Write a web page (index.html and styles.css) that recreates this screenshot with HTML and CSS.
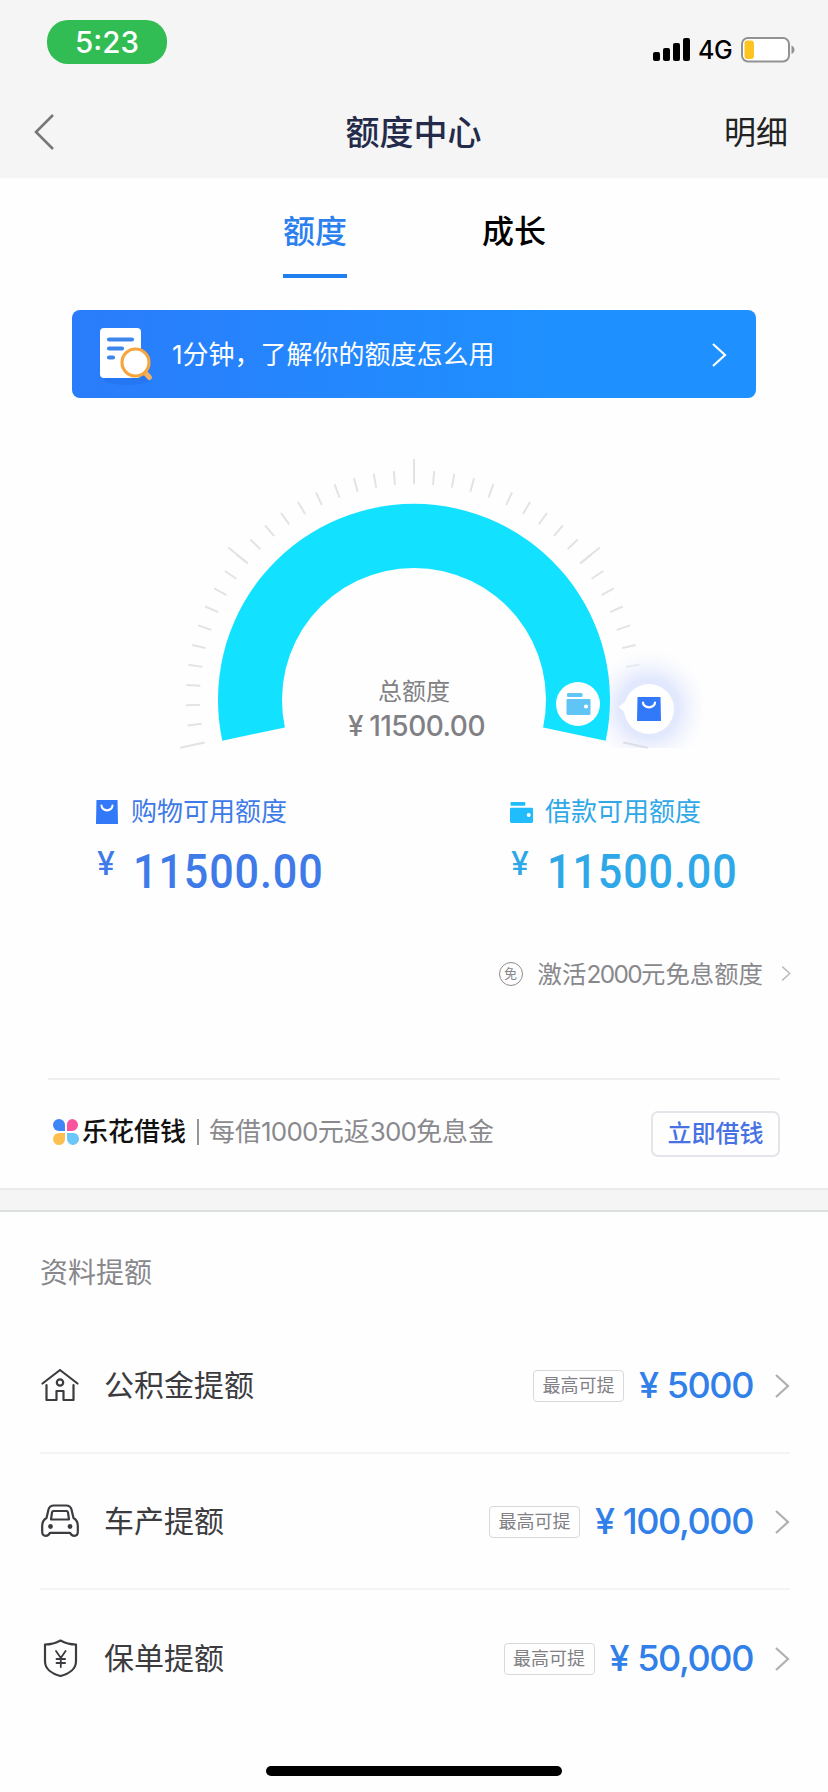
FILE: index.html
```html
<!DOCTYPE html>
<html lang="zh-CN">
<head>
<meta charset="utf-8">
<title>额度中心</title>
<link rel="stylesheet" href="styles.css">
</head>
<body>
<svg class="defs" width="0" height="0">
  <symbol id="bag" viewBox="0 0 24 24" preserveAspectRatio="none">
    <path d="M.5 0h23l.5 24H0z" fill="currentColor"/>
    <path d="M6 5.500a6 4.800 0 0 0 12 0" fill="none" stroke="#fff" stroke-width="2.200" stroke-linecap="round"/>
  </symbol>
  <symbol id="wallet" viewBox="0 0 24 24">
    <rect x=".5" y="1" width="15.500" height="4" rx="1.200" fill="currentColor"/>
    <path d="M0 8.200q0-1.200 1.200-1.200H23q1 0 1 1v13.500q0 1.500-1.500 1.500h-21Q0 23 0 21.500z" fill="currentColor"/>
    <circle cx="19.500" cy="14.500" r="2.100" fill="#fff"/>
  </symbol>
  <symbol id="arrow" viewBox="0 0 16 26">
    <path d="M2 2l12 11L2 24" fill="none" stroke="currentColor" stroke-width="2.200"/>
  </symbol>
</svg>

<header class="top">
  <div class="status">
    <span class="clock">5:23</span>
    <div class="signals">
      <svg width="38" height="24" viewBox="0 0 38 24"><rect x="0" y="14" width="7" height="9" rx="2"/><rect x="10" y="10" width="7" height="13" rx="2"/><rect x="20" y="5" width="7" height="18" rx="2"/><rect x="30" y="0" width="7" height="23" rx="2"/></svg>
      <span class="network">4G</span>
      <svg width="54" height="26" viewBox="0 0 54 26"><rect x="1" y="1" width="47" height="23.500" rx="6" fill="#fff" stroke="#929292" stroke-width="2"/><rect x="3.500" y="3.500" width="9.500" height="18.500" rx="3" fill="#fdc321"/><path d="M50.500 8.500c4 1.500 4 7 0 8.500z" fill="#929292"/></svg>
    </div>
  </div>
  <nav class="navbar">
    <svg class="back" width="24" height="38" viewBox="0 0 24 38"><path d="M20 2L3 19l17 17" fill="none" stroke="#777" stroke-width="2.600"/></svg>
    <h1>额度中心</h1>
    <a class="detail">明细</a>
  </nav>
</header>

<div class="tabs"><a class="tab active">额度</a><a class="tab">成长</a></div>

<section class="banner">
  <svg width="56" height="60" viewBox="0 0 56 60">
    <ellipse cx="27" cy="54" rx="23" ry="5" fill="#1b5fd9" opacity=".25"/>
    <rect x="0" y="2" width="41" height="50" rx="4" fill="#fff"/>
    <path d="M9 13.500h23M9 22.500h13M9 31.500h4" stroke="#3f86ec" stroke-width="4.200" stroke-linecap="round"/>
    <path d="M44.500 46l5 5.500" stroke="#f0b262" stroke-width="5" stroke-linecap="round"/>
    <circle cx="35.500" cy="36.500" r="13.500" fill="#fff" stroke="#f7a53f" stroke-width="3.200"/>
  </svg>
  <p>1分钟，了解你的额度怎么用</p>
  <svg class="banner-arrow" width="16" height="26"><use href="#arrow"/></svg>
</section>

<section class="gauge">
  <svg class="dial" width="570" height="310" viewBox="134 448 570 310">
    <defs>
      <radialGradient id="glow" gradientUnits="userSpaceOnUse" cx="649" cy="708" r="60"><stop offset="0" stop-color="#d9e2fc"/><stop offset=".5" stop-color="#e3e9fd"/><stop offset="1" stop-color="#f8f9fe" stop-opacity="0"/></radialGradient>
    </defs>
    <g fill="none" stroke="#e3e3e5" stroke-width="2">
      <path d="M197.800 744a221 221 0 1 1 432.400 0" stroke-width="14" pathLength="40" stroke-dasharray=".1 .9" stroke-dashoffset=".05"/>
      <path d="M414 459v25" id="major"/>
      <use href="#major" transform="rotate(-102 414 698)"/>
      <use href="#major" transform="rotate(-51 414 698)"/>
      <use href="#major" transform="rotate(51 414 698)"/>
    </g>
    <rect x="590" y="648" width="112" height="100" fill="url(#glow)"/>
    <path d="M222.300 740.700A196 196 0 1 1 605.700 740.700L543.100 727.400A132 132 0 1 0 284.900 727.400z" fill="#12e2ff"/>
    <use href="#major" transform="rotate(102 414 698)" fill="none" stroke="#dcdfe8" stroke-width="2"/>
    <path d="M618.500 707l12-10v20z" fill="#fff"/>
    <circle cx="649" cy="709" r="25" fill="#fff"/>
    <circle cx="578" cy="704" r="22" fill="#fff"/>
    <use href="#wallet" x="566" y="692" width="25" height="24" class="ico-wallet-soft"/>
    <use href="#bag" x="637" y="697" width="24" height="24" class="ico-bag"/>
  </svg>
  <div class="total">
    <span class="total-label">总额度</span>
    <span class="total-sum"><i>¥</i><b>11500.00</b></span>
  </div>
</section>

<section class="limits">
  <div class="limit shop">
    <div class="limit-name"><svg width="24" height="24"><use href="#bag" x="1" width="22" height="24"/></svg><span>购物可用额度</span></div>
    <div class="limit-sum"><i>¥</i><b>11500.00</b></div>
  </div>
  <div class="limit loan">
    <div class="limit-name"><svg width="24" height="24"><use href="#wallet" x="1" y="1" width="23" height="23"/></svg><span>借款可用额度</span></div>
    <div class="limit-sum"><i>¥</i><b>11500.00</b></div>
  </div>
</section>

<a class="activate"><span class="free">免</span><span class="activate-text">激活<em>2000</em>元免息额度</span><svg width="10" height="17"><use href="#arrow"/></svg></a>

<section class="promo">
  <svg width="26" height="26" viewBox="0 0 26 26"><path d="M6 0h0a6 6 0 0 1 6 6v6H6A6 6 0 0 1 6 0z" fill="#3d86f7"/><path d="M19 0a6 6 0 0 1 0 12h-5V6a6 6 0 0 1 5-6z" fill="#f9529f"/><path d="M6 14h6v5.500a6 6 0 1 1-6-5.500z" fill="#fdbf50"/><path d="M14 14h5a6 6 0 1 1-5 6z" fill="#6bc6f9"/></svg>
  <strong>乐花借钱</strong><span class="bar"></span>
  <span class="promo-text">每借<em>1000</em>元返<em>300</em>免息金</span>
  <a class="button">立即借钱</a>
</section>

<div class="band"></div>

<section class="raise">
  <h2>资料提额</h2>
  <a class="row">
    <svg class="row-icon" width="38" height="38" viewBox="0 0 38 38"><g fill="none" stroke="#3b3b40" stroke-width="2.200" stroke-linecap="round" stroke-linejoin="round"><path d="M1.500 17.500L19 4l17.500 13.500M5.500 19v15h10v-9h7v9h10V19"/><circle cx="19" cy="16.500" r="3.200"/></g></svg>
    <span class="row-name">公积金提额</span><span class="tag">最高可提</span><span class="sum"><i>¥</i><b>5000</b></span><svg class="go" width="16" height="26"><use href="#arrow"/></svg>
  </a>
  <a class="row">
    <svg class="row-icon" width="38" height="38" viewBox="0 0 38 38"><g fill="none" stroke="#3b3b40" stroke-width="2.200" stroke-linecap="round" stroke-linejoin="round"><path d="M13 3.500h12q4.500 0 5.500 4l2 8.500q4.300 2.500 4.300 8v6q0 3.800-3.500 3.800-3 0-4.300-3H9q-1.300 3-4.300 3Q1.200 33.800 1.200 30v-6q0-5.500 4.300-8l2-8.500Q8.500 3.500 13 3.500z"/><path d="M12.500 9h13q1.200 0 1.500 1.500l1 7H10l1-7Q11.300 9 12.500 9z"/></g><circle cx="9.500" cy="24.500" r="2.400" fill="#3b3b40"/><circle cx="29" cy="24.500" r="2.400" fill="#3b3b40"/></svg>
    <span class="row-name">车产提额</span><span class="tag">最高可提</span><span class="sum"><i>¥</i><b>100,000</b></span><svg class="go" width="16" height="26"><use href="#arrow"/></svg>
  </a>
  <a class="row">
    <svg class="row-icon" width="38" height="38" viewBox="0 0 38 38"><g fill="none" stroke="#3b3b40" stroke-width="2.200" stroke-linecap="round" stroke-linejoin="round"><path d="M19.500 1.500q7 4 15.500 4V22c0 8-7 13-15.500 15C11 35 4 30 4 22V5.500q8.500 0 15.500-4z"/><path d="M15 12l4.800 7 4.800-7M19.800 19v9M15.500 20h8.600M15.500 24h8.600" stroke-width="1.800"/></g></svg>
    <span class="row-name">保单提额</span><span class="tag">最高可提</span><span class="sum"><i>¥</i><b>50,000</b></span><svg class="go" width="16" height="26"><use href="#arrow"/></svg>
  </a>
</section>
<div class="home-bar"></div>
</body>
</html>
```
FILE: styles.css
```css
* { box-sizing: border-box; }
body {
  margin: 0;
  width: 828px;
  height: 1792px;
  display: flex;
  flex-direction: column;
  overflow: hidden;
  background: #fefefe;
  font-family: Inter, "Noto Sans CJK SC", sans-serif;
  color: #3b3b40;
}
h1, h2, p { margin: 0; font-weight: 400; }
i, em { font-style: normal; }
b { font-weight: inherit; }
svg { flex: none; display: block; }
.defs { position: absolute; }

.top { height: 178px; background: #f5f5f5; }
.status { height: 88px; padding: 20px 33px 0 47px; display: flex; justify-content: space-between; align-items: flex-start; }
.clock {
  width: 120px; height: 44px; border-radius: 21px; background: #31bd53;
  color: #fff; font-size: 29.500px; line-height: 45px; font-weight: 500; text-align: center;
}
.signals { display: flex; align-items: center; gap: 7px; padding-top: 17px; color: #000; }
.network { width: 36px; font-size: 25px; line-height: 26px; font-weight: 500; letter-spacing: -.4px; }
.navbar { height: 88px; padding: 0 40px 0 33px; display: grid; grid-template-columns: 64px 1fr 64px; align-items: center; }
.navbar h1 { padding-top: 1px; font-size: 34px; line-height: 40px; font-weight: 500; color: #242b4a; text-align: center; margin-left: 6px; }
.detail { padding-top: 2px; font-size: 32px; line-height: 40px; color: #222; }

.tabs { height: 132px; display: flex; gap: 135px; padding: 33px 0 0 283px; }
.tab { width: 64px; height: 67px; font-size: 32px; line-height: 42px; font-weight: 500; color: #000; }
.tab.active { color: #2b80f0; border-bottom: 4px solid #2080f0; }

.banner {
  margin: 0 72px; height: 88px; padding: 0 29px 0 28px; border-radius: 8px;
  display: flex; align-items: center;
  background: linear-gradient(90deg, #2a7cfb, #1f90ff 70%);
  color: #fff;
}
.banner svg:first-child { margin-top: 4px; }
.banner p { flex: 1; margin: 2px 0 0 16px; font-size: 26px; line-height: 36px; }
.banner-arrow { margin-top: 2px; }

.gauge { height: 360px; padding: 50px 0 0 134px; display: grid; }
.dial { grid-area: 1 / 1; }
.total { grid-area: 1 / 1; width: 560px; padding-top: 227px; display: flex; flex-direction: column; align-items: center; color: #808085; }
.total-label { font-size: 24px; line-height: 34px; }
.total-sum { display: flex; gap: 6px; font-size: 28px; line-height: 34px; font-weight: 500; letter-spacing: -.5px; margin-left: 5px; }
.ico-wallet-soft { color: #60c4f5; }
.ico-bag { color: #3179f8; }

.limits { height: 142px; padding: 37px 0 0 95px; display: grid; grid-template-columns: 414px 1fr; align-content: start; }
.limit-name { display: flex; gap: 12px; font-size: 26px; line-height: 34px; align-items: center; }
.limit-sum { display: flex; font-family: Roboto, sans-serif; font-weight: 500; margin-top: 13px; }
.limit-sum i { width: 38px; padding: 2px 0 0 2px; font-size: 32px; line-height: 40px; font-family: Inter, sans-serif; font-weight: 500; }
.limit-sum b { font-size: 49px; line-height: 60px; letter-spacing: 1px; transform: scaleX(.88); transform-origin: left; }
.shop { color: #3e7ae8; }
.shop svg { color: #3179f8; }
.loan { color: #2fa8e8; }
.loan svg { color: #20bcfb; }

.activate { height: 178px; padding: 53px 37px 0 0; display: flex; justify-content: flex-end; align-items: flex-start; color: #88888c; font-size: 24.400px; line-height: 42px; }
.promo-text em { letter-spacing: -.8px; }
.activate em { letter-spacing: -1.600px; }
.free { width: 24px; height: 24px; margin: 9px 15px 0 0; border: 1.500px solid #8c8c90; border-radius: 50%; font-size: 13px; line-height: 20px; text-align: center; }
.activate svg { color: #b8b8bc; margin: 12px 0 0 18px; }

.promo { margin: 0 48px; height: 110px; border-top: 2px solid #eee; display: flex; align-items: center; padding: 0 0 4px 5px; font-size: 26px; line-height: 36px; }
.promo strong { margin-left: 3px; font-weight: 500; color: #111; }
.bar { width: 2px; height: 26px; margin: 0 10px 0 11px; background: #96969a; }
.promo-text { flex: 1; color: #8a8a8e; }
.button { width: 129px; height: 46px; margin-top: 4px; border: 2px solid #e4e5ea; border-radius: 7px; text-align: center; font-size: 24px; line-height: 42px; font-weight: 500; color: #4672e4; }

.band { height: 24px; background: #f5f5f5; border-top: 2px solid #ebebeb; border-bottom: 2px solid #dcdfe0; }

.raise { padding: 0 38px 0 40px; height: 552px; }
.raise h2 { font-size: 28px; line-height: 40px; padding: 41px 0 25px; color: #88888c; }
.row { height: 136px; border-bottom: 2px solid #f4f4f5; display: flex; align-items: center; }
.row:last-child { border: 0; }
.row-icon { margin: 0 25px 0 1px; }
.row-name { flex: 1; font-size: 30px; line-height: 42px; }
.tag { width: 91px; height: 32px; margin-top: 2px; border: 1.500px solid #d8d8dc; border-radius: 4px; font-size: 18px; line-height: 29px; text-align: center; color: #808085; }
.sum { display: flex; gap: 9px; margin-left: 15px; font-size: 36px; line-height: 44px; font-weight: 500; letter-spacing: -1.400px; color: #317fe8; }
.go { margin-left: 21px; margin-top: 2px; color: #b0b0b4; }

.home-bar { width: 296px; height: 10px; margin: 2px auto 0; border-radius: 5px; background: #000; }
```
